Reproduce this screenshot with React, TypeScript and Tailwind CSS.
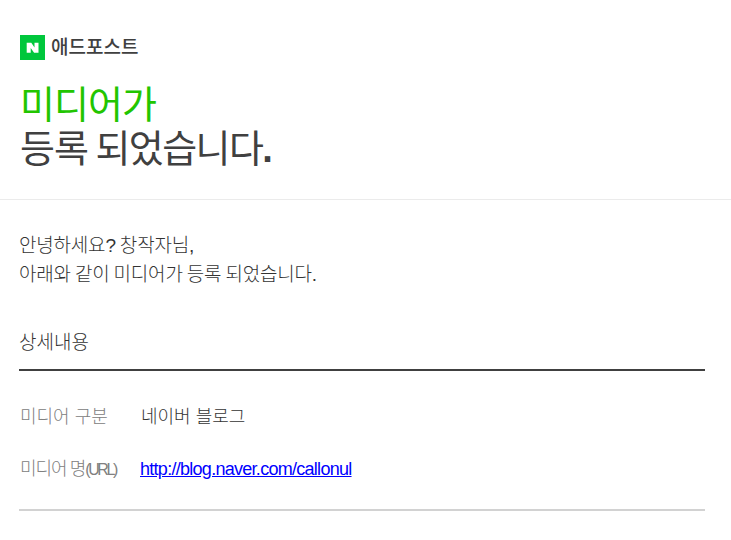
import React from 'react';

const FONT = "font-['Liberation_Sans','Noto_Sans_CJK_KR',sans-serif]";

const App: React.FC = () => {
	return (
		<div className={`${FONT} min-h-[540px] w-full overflow-hidden bg-white text-[#404040]`}>
			<header className="h-[200px] border-b border-[#ebebeb] px-5 pt-[35px]">
				<div className="flex h-[25px] items-center">
					<svg width="25" height="25" viewBox="0 0 25 25" aria-hidden="true">
						<rect width="25" height="25" fill="#00c73c" />
						<path d="M6.7 7.7h4.6l3.2 4.7V7.7h4v10h-4.4l-3.4-4.8v4.8h-4z" fill="#fff" />
					</svg>
					<span className="ml-[6px] text-[19px] leading-[25px] font-medium">애드포스트</span>
				</div>
				<h1 className="mt-[23px] text-[38px] leading-[44px] font-normal tracking-[-1px] [word-spacing:-2px]">
					<span className="block text-[#22c500]">미디어가</span>
					<span className="block">
						등록 <span className="tracking-[-1.6px]">되었습니다</span>
						<b className="font-bold">.</b>
					</span>
				</h1>
			</header>
			<main className="pr-[26px] pl-[19px]">
				<p className="mt-[31px] text-[19px] leading-[29px] font-light tracking-[-0.2px] [word-spacing:-1px] text-[#333]">
					안녕하세요? 창작자님,
					<br />
					아래와 같이 미디어가 등록 되었습니다.
				</p>
				<h2 className="mt-[41px] border-b-2 border-[#404040] pb-[14px] text-[19px] leading-[25px] font-light text-[#333]">
					상세내용
				</h2>
				<dl className="border-b-2 border-[#d2d2d2] pt-[34px] pb-[27px]">
					<div className="flex h-[52px] items-start">
						<dt className="w-[122px] pl-px text-[18px] leading-[25px] font-light whitespace-nowrap text-[#808080]">
							미디어 구분
						</dt>
						<dd className="text-[18px] leading-[25px] font-light text-[#333]">네이버 블로그</dd>
					</div>
					<div className="flex h-[25px] items-start">
						<dt className="w-[122px] pl-px text-[18px] leading-[25px] font-light tracking-[-1px] [word-spacing:-1px] whitespace-nowrap text-[#808080]">
							미디어 명<span className="text-[16px] tracking-[-2.4px]">(URL)</span>
						</dt>
						<dd className="-ml-px text-[18px] leading-[25px] tracking-[-0.72px]">
							<a href="http://blog.naver.com/callonul" className="text-[#0000ff] underline">
								http://blog.naver.com/callonul
							</a>
						</dd>
					</div>
				</dl>
			</main>
		</div>
	);
};

export default App;
